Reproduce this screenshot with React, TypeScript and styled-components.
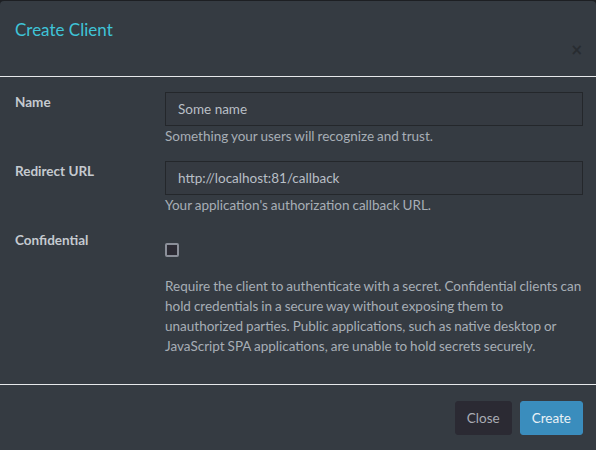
import styled, { createGlobalStyle } from "styled-components";

const GlobalStyle = createGlobalStyle`
  html, body {
    margin: 0;
    padding: 0;
    background: #1d1f23;
  }
  body {
    font-family: Lato, "Noto Sans", sans-serif;
    font-size: 13.5px;
    line-height: 20px;
  }
`;

const Modal = styled.div`
  width: 596px;
  height: 449px;
  margin-top: 1px;
  background: #353b42;
  border-radius: 4px 4px 0 0;
  display: flex;
  flex-direction: column;
  overflow: hidden;
`;

const Header = styled.header`
  height: 45px;
  padding: 15px 13px 15px 15px;
  display: flex;
  justify-content: space-between;
  border-bottom: 1px solid #e6e8ea;
`;

const Title = styled.h4`
  margin: 0;
  font-size: 17px;
  font-weight: 400;
  line-height: 27px;
  color: #3fc4d8;
`;

const CloseX = styled.button`
  align-self: flex-end;
  margin-bottom: 3px;
  padding: 0;
  border: none;
  background: none;
  font-family: "DejaVu Sans", sans-serif;
  font-size: 15px;
  font-weight: 700;
  line-height: 16px;
  color: #282c31;
`;

const Body = styled.div`
  flex: 1;
  padding: 15px 13px 0 15px;
  display: flex;
  flex-direction: column;
  gap: 15px;
  border-bottom: 1px solid #e6e8ea;
`;

const Row = styled.div`
  display: grid;
  grid-template-columns: 150px 1fr;
`;

const Label = styled.label`
  font-weight: 700;
  color: #c5cad0;
`;

const Field = styled.div`
  display: flex;
  flex-direction: column;
`;

const Input = styled.input`
  box-sizing: border-box;
  width: 100%;
  height: 34px;
  padding: 0 12px;
  border: 1px solid #24272b;
  background: #353a41;
  color: #b9bfc6;
  font: inherit;
  outline: none;
`;

const Help = styled.p<{ $top?: number }>`
  margin: ${(p) => p.$top ?? 0}px 0 0;
  color: #a7aeb6;
  word-spacing: -0.5px;
  white-space: nowrap;
`;

const Check = styled.input`
  appearance: none;
  box-sizing: border-box;
  width: 14px;
  height: 14px;
  margin: 13px 0 0;
  border: 2px solid #8b8f99;
  border-radius: 2px;
  background: #2c2b34;
`;

const Footer = styled.footer`
  padding: 16px 13px 15px;
  display: flex;
  justify-content: flex-end;
  gap: 8px;
`;

const Button = styled.button<{ $primary?: boolean }>`
  height: 34px;
  padding: 0 11px;
  border: 1px solid ${(p) => (p.$primary ? "#3b8dbf" : "#2b2a33")};
  border-radius: 3px;
  background: ${(p) => (p.$primary ? "#3a8dbd" : "#2b2a33")};
  color: ${(p) => (p.$primary ? "#e9f1f6" : "#a9acb3")};
  font: inherit;
  font-size: 13.5px;
`;

export default function App() {
  return (
    <>
      <GlobalStyle />
      <Modal>
        <Header>
          <Title>Create Client</Title>
          <CloseX aria-label="Close">×</CloseX>
        </Header>
        <Body>
          <Row>
            <Label>Name</Label>
            <Field>
              <Input defaultValue="Some name" />
              <Help>Something your users will recognize and trust.</Help>
            </Field>
          </Row>
          <Row>
            <Label>Redirect URL</Label>
            <Field>
              <Input defaultValue="http://localhost:81/callback" />
              <Help>Your application's authorization callback URL.</Help>
            </Field>
          </Row>
          <Row>
            <Label>Confidential</Label>
            <Field>
              <Check type="checkbox" />
              <Help $top={19}>
                Require the client to authenticate with a secret. Confidential clients can
                <br />
                hold credentials in a secure way without exposing them to
                <br />
                unauthorized parties. Public applications, such as native desktop or
                <br />
                JavaScript SPA applications, are unable to hold secrets securely.
              </Help>
            </Field>
          </Row>
        </Body>
        <Footer>
          <Button>Close</Button>
          <Button $primary>Create</Button>
        </Footer>
      </Modal>
    </>
  );
}
